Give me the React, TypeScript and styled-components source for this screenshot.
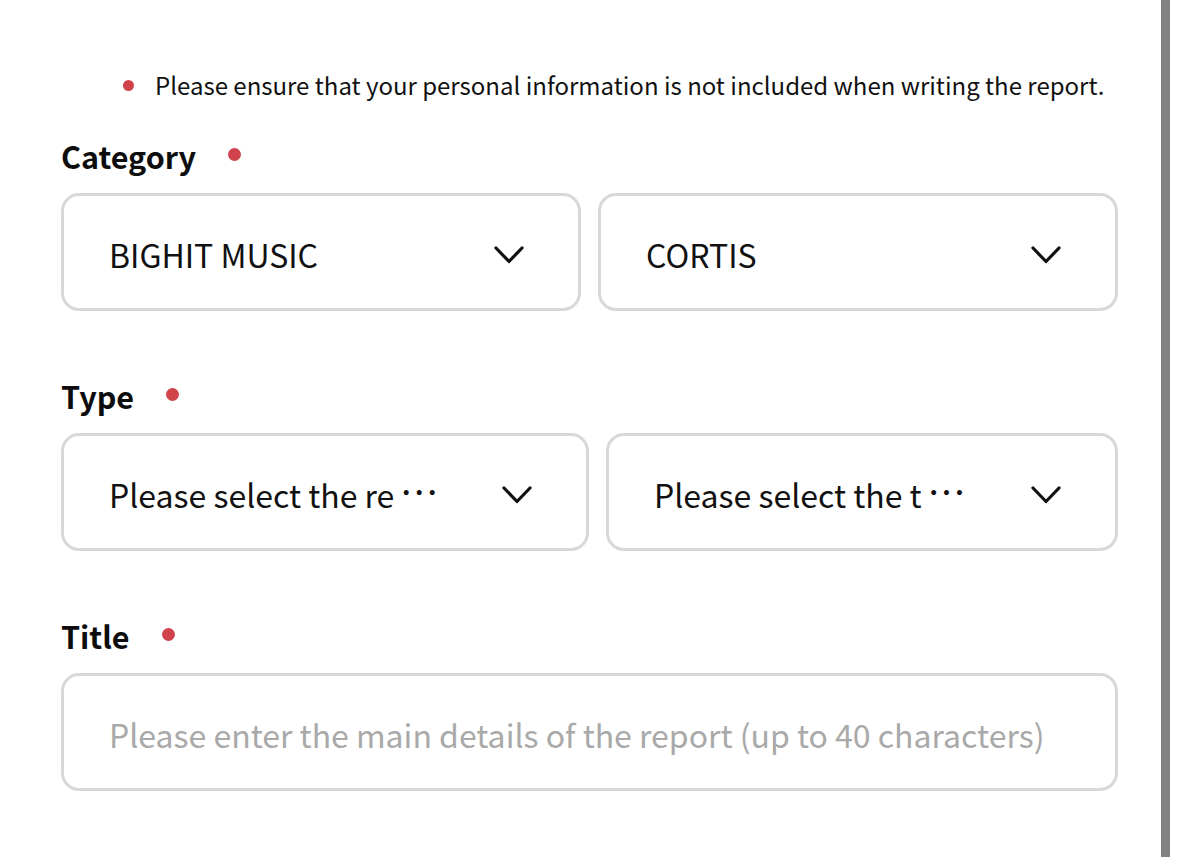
import React from "react";
import styled, { createGlobalStyle } from "styled-components";

const Global = createGlobalStyle`
  html, body { margin: 0; padding: 0; background: #ffffff; }
  body { font-family: "Noto Sans CJK KR", "Noto Sans", sans-serif; color: #111111; }
  * { box-sizing: border-box; }
`;

const Page = styled.div`
  display: flex;
  height: 857px;
  padding-left: 61px;
  overflow: hidden;
`;

const Form = styled.main`
  width: 1057px;
  display: flex;
  flex-direction: column;
  padding-top: 67px;
`;

const ScrollBar = styled.div`
  width: 9px;
  margin-left: 43px;
  background: #828282;
  align-self: stretch;
`;

const Notice = styled.p`
  margin: 0 0 35px 0;
  padding-left: 62px;
  display: flex;
  align-items: center;
  gap: 21px;
  font-size: 24px;
  line-height: 36px;
  color: #111;
`;

const Dot = styled.span<{ $size: number }>`
  display: inline-block;
  width: ${(p) => p.$size}px;
  height: ${(p) => p.$size}px;
  border-radius: 50%;
  background: #d1434b;
  flex: none;
`;

const Field = styled.section<{ $last?: boolean }>`
  display: flex;
  flex-direction: column;
  gap: 19px;
  margin-bottom: ${(p) => (p.$last ? 0 : 67)}px;
`;

const Label = styled.h3<{ $gap: number }>`
  margin: 0;
  display: flex;
  align-items: center;
  gap: ${(p) => p.$gap}px;
  font-size: 30.5px;
  line-height: 36px;
  font-weight: 700;
  color: #0d0d0d;
  ${Dot} { position: relative; top: -2px; }
`;

const Row = styled.div<{ $cols: string }>`
  display: grid;
  grid-template-columns: ${(p) => p.$cols};
  gap: 17px;
`;

const Box = styled.div`
  height: 118px;
  border: 3px solid #d8d8d8;
  border-radius: 18px;
  background: #fff;
  display: flex;
  align-items: center;
  padding: 3px 54px 0 45px;
`;

const SelectBox = styled(Box)`
  justify-content: space-between;
  cursor: pointer;
`;

const Value = styled.span`
  display: flex;
  align-items: center;
  font-size: 32px;
  line-height: 46px;
  color: #111;
  white-space: nowrap;
`;

const Ellipsis = styled.span`
  margin-left: 4px;
  font-size: 27px;
  font-weight: 700;
  letter-spacing: -3px;
  position: relative;
  top: -2px;
`;

const Input = styled.input`
  width: 100%;
  border: none;
  outline: none;
  background: transparent;
  font-family: "Noto Sans CJK KR", "Noto Sans", sans-serif;
  font-size: 32px;
  line-height: 46px;
  height: 46px;
  color: #111;
  padding: 0;
  &::placeholder { color: #a9a9a9; }
`;

const ChevronSvg = styled.svg`
  flex: none;
  position: relative;
  top: 1px;
`;

const Chevron = () => (
  <ChevronSvg width="30" height="18" viewBox="0 0 30 18" fill="none" aria-hidden>
    <path d="M2 2 L15 15.5 L28 2" stroke="#111" strokeWidth="3.2" strokeLinecap="round" strokeLinejoin="round" />
  </ChevronSvg>
);

const Select = ({ value, more }: { value: string; more?: boolean }) => (
  <SelectBox>
    <Value>
      {value}
      {more && <Ellipsis>···</Ellipsis>}
    </Value>
    <Chevron />
  </SelectBox>
);

export default function App() {
  return (
    <>
      <Global />
      <Page>
        <Form>
          <Notice>
            <Dot $size={11} />
            Please ensure that your personal information is not included when writing the report.
          </Notice>

          <Field>
            <Label $gap={32}>
              Category <Dot $size={13} />
            </Label>
            <Row $cols="520px 520px">
              <Select value="BIGHIT MUSIC" />
              <Select value="CORTIS" />
            </Row>
          </Field>

          <Field>
            <Label $gap={32}>
              Type <Dot $size={13} />
            </Label>
            <Row $cols="528px 512px">
              <Select value="Please select the re" more />
              <Select value="Please select the t" more />
            </Row>
          </Field>

          <Field $last>
            <Label $gap={32}>
              Title <Dot $size={13} />
            </Label>
            <Box>
              <Input placeholder="Please enter the main details of the report (up to 40 characters)" />
            </Box>
          </Field>
        </Form>
        <ScrollBar />
      </Page>
    </>
  );
}
